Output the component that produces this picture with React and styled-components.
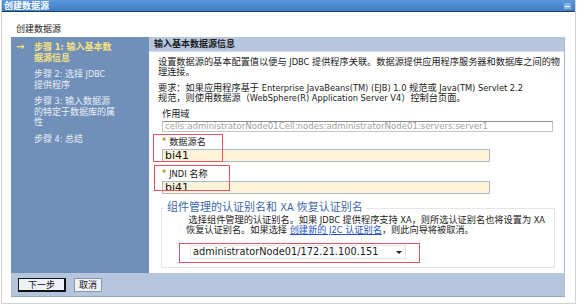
import React from 'react'
import styled, { createGlobalStyle } from 'styled-components'

const Global = createGlobalStyle`
  html, body {
    margin: 0;
    padding: 0;
    background: #fff;
  }
  body {
    width: 582px;
    height: 306px;
    overflow: hidden;
    font-family: "DejaVu Sans Condensed", "DejaVu Sans", "Noto Sans CJK SC", sans-serif;
  }
`

const Window = styled.div`
  box-sizing: border-box;
  width: 575px;
  height: 304px;
  margin-left: 1px;
  border: 1px solid #cfd3d8;
  border-top: none;
  background: #fff;
  display: flex;
  flex-direction: column;
`

const TitleBar = styled.div`
  height: 11px;
  background: linear-gradient(#5c98dc, #3f7cc6);
  border-bottom: 1px solid #1d3f66;
  display: flex;
  align-items: center;
  justify-content: space-between;
  padding: 0 3px 0 2px;
  color: #fff;
  font-family: "Noto Sans CJK SC", sans-serif;
  font-size: 9px;
  font-weight: bold;
  line-height: 11px;
`

const MinButton = styled.span`
  width: 9px;
  height: 8px;
  background: #7fb0e6;
  border: 1px solid #5b8fcc;
  box-sizing: border-box;
  display: flex;
  align-items: center;
  justify-content: center;
  &::after {
    content: '';
    width: 5px;
    height: 1px;
    background: #fff;
    margin-top: 2px;
  }
`

const Page = styled.div`
  padding: 0 10px 0 9px;
  flex: 1;
  display: flex;
  flex-direction: column;
`

const Crumb = styled.div`
  font-size: 9px;
  color: #222;
  height: 25px;
  line-height: 10px;
  padding: 12px 0 0 5px;
  box-sizing: border-box;
  font-family: "Noto Sans CJK SC", sans-serif;
`

const Wizard = styled.div`
  display: grid;
  grid-template-columns: 138px 416px;
  grid-template-rows: 236px 24px;
`

const Nav = styled.div`
  background: #7090b9;
  padding: 5px 0 0 4px;
  display: flex;
  flex-direction: column;
  gap: 6px;
  font-size: 9px;
  line-height: 10.5px;
`

const Step = styled.div`
  display: grid;
  grid-template-columns: 19px 80px;
  color: ${p => (p.$active ? '#f7e27c' : '#e9eef7')};
  font-weight: ${p => (p.$active ? 'bold' : 'normal')};
  white-space: nowrap;
`

const Arrow = styled.span`
  color: #f7e27c;
  font-family: "DejaVu Sans", sans-serif;
  font-size: 10px;
  font-weight: bold;
  padding-left: 1px;
`

const Content = styled.div`
  background: #fff;
  border-right: 1px solid #a9b8cf;
  display: flex;
  flex-direction: column;
`

const Header = styled.div`
  height: 15px;
  background: #b7c7df;
  border-bottom: 1px solid #d5deeb;
  box-sizing: border-box;
  padding-left: 5px;
  font-size: 9px;
  font-weight: bold;
  line-height: 15px;
  color: #1a1a1a;
`

const ContentBody = styled.div`
  padding: 5px 10px 0 9px;
  display: flex;
  flex-direction: column;
  font-size: 9.2px;
  line-height: 10px;
  color: #222;
  white-space: nowrap;
`

const Para = styled.p`
  margin: 0 0 6px;
`

const Label = styled.div`
  padding-left: 4px;
  height: 10px;
  line-height: 10px;
  display: flex;
  gap: 3px;
`

const Star = styled.span`
  color: #b8922c;
  font-weight: bold;
  font-family: "DejaVu Sans", sans-serif;
  font-size: 8px;
`

const ScopeBox = styled.div`
  margin: 2px 0 0 4px;
  width: 391px;
  height: 11px;
  box-sizing: border-box;
  border: 1px solid #c4c4c4;
  border-top-color: #8f8f8f;
  color: #a2a2a2;
  font-family: "DejaVu Sans", sans-serif;
  font-size: 8.6px;
  line-height: 9px;
  padding-left: 2px;
  overflow: hidden;
`

const Field = styled.div`
  position: relative;
  margin-top: ${p => p.$top}px;
`

const TextBox = styled.div`
  margin: 2px 0 0 4px;
  width: 328px;
  height: 13px;
  box-sizing: border-box;
  background: #fdf3d9;
  border: 1px solid #a7b9cf;
  font-family: "DejaVu Sans", sans-serif;
  font-size: 11px;
  line-height: 12px;
  padding-left: 2px;
  color: #111;
`

const Callout = styled.span`
  position: absolute;
  left: ${p => p.$left}px;
  top: ${p => p.$top}px;
  width: ${p => p.$w}px;
  height: ${p => p.$h}px;
  border: 1px solid #e4545a;
  box-sizing: border-box;
  pointer-events: none;
`

const Group = styled.fieldset`
  margin: 8px 0 0 3px;
  width: 394px;
  height: 66px;
  box-sizing: border-box;
  border: 1px solid #e3e6ea;
  padding: 0 0 0 24px;
`

const Legend = styled.legend`
  color: #3d68a9;
  font-size: 11px;
  line-height: 12px;
  padding: 0 3px;
  margin-left: -22px;
`

const GroupText = styled.div`
  line-height: 10px;
  margin-top: 1px;
`

const Link = styled.a`
  color: #2453c4;
  text-decoration: underline;
`

const SelectRow = styled.div`
  position: relative;
  margin: 10px 0 0 4px;
`

const Select = styled.div`
  width: 216px;
  height: 14px;
  box-sizing: border-box;
  border: 1px solid #e6e6e6;
  display: flex;
  align-items: center;
  justify-content: space-between;
  padding: 0 3px 0 2px;
  font-family: "DejaVu Sans", sans-serif;
  font-size: 9.8px;
  color: #1a1a1a;
`

const Caret = styled.span`
  width: 0;
  height: 0;
  border-left: 3px solid transparent;
  border-right: 3px solid transparent;
  border-top: 3px solid #222;
`

const Footer = styled.div`
  grid-column: 1 / 3;
  background: #b5c5dd;
  border-bottom: 1px solid #93a8c6;
  display: flex;
  align-items: center;
  gap: 8px;
  padding-left: 7px;
`

const Button = styled.button`
  height: 14px;
  padding: 0 ${p => (p.$primary ? 9 : 4)}px;
  box-sizing: border-box;
  background: #eef2f8;
  border: 1px solid ${p => (p.$primary ? '#111' : '#8d96a3')};
  border-right-width: ${p => (p.$primary ? 2 : 1)}px;
  border-bottom-width: ${p => (p.$primary ? 2 : 1)}px;
  font-family: "Noto Sans CJK SC", sans-serif;
  font-size: 9px;
  line-height: 11px;
  color: #111;
`

export default function App() {
  return (
    <>
      <Global />
      <Window>
        <TitleBar>
          <span>创建数据源</span>
          <MinButton />
        </TitleBar>
        <Page>
          <Crumb>创建数据源</Crumb>
          <Wizard>
            <Nav>
              <Step $active>
                <Arrow>→</Arrow>
                <span>步骤 1: 输入基本数<br />据源信息</span>
              </Step>
              <Step>
                <span />
                <span>步骤 2: 选择 JDBC<br />提供程序</span>
              </Step>
              <Step>
                <span />
                <span>步骤 3: 输入数据源<br />的特定于数据库的属<br />性</span>
              </Step>
              <Step>
                <span />
                <span>步骤 4: 总结</span>
              </Step>
            </Nav>
            <Content>
              <Header>输入基本数据源信息</Header>
              <ContentBody>
                <Para>
                  设置数据源的基本配置值以便与 JDBC 提供程序关联。数据源提供应用程序服务器和数据库之间的物<br />
                  理连接。
                </Para>
                <Para>
                  要求：如果应用程序基于 Enterprise JavaBeans(TM) (EJB) 1.0 规范或 Java(TM) Servlet 2.2<br />
                  规范，则使用数据源（WebSphere(R) Application Server V4）控制台页面。
                </Para>
                <Label>作用域</Label>
                <ScopeBox>cells:administratorNode01Cell:nodes:administratorNode01:servers:server1</ScopeBox>
                <Field $top={5}>
                  <Label><Star>*</Star>数据源名</Label>
                  <TextBox>bi41</TextBox>
                  <Callout $left={-5} $top={-3} $w={70} $h={28} />
                </Field>
                <Field $top={7}>
                  <Label><Star>*</Star>JNDI 名称</Label>
                  <TextBox>bi41</TextBox>
                  <Callout $left={-4} $top={-4} $w={76} $h={26} />
                </Field>
                <Group>
                  <Legend>组件管理的认证别名和 XA 恢复认证别名</Legend>
                  <GroupText>
                    &nbsp;选择组件管理的认证别名。如果 JDBC 提供程序支持 XA，则所选认证别名也将设置为 XA<br />
                    恢复认证别名。如果选择 <Link>创建新的 J2C 认证别名</Link>，则此向导将被取消。
                  </GroupText>
                  <SelectRow>
                    <Select>
                      <span>administratorNode01/172.21.100.151</span>
                      <Caret />
                    </Select>
                    <Callout $left={-11} $top={-2} $w={241} $h={20} />
                  </SelectRow>
                </Group>
              </ContentBody>
            </Content>
            <Footer>
              <Button $primary>下一步</Button>
              <Button>取消</Button>
            </Footer>
          </Wizard>
        </Page>
      </Window>
    </>
  )
}
